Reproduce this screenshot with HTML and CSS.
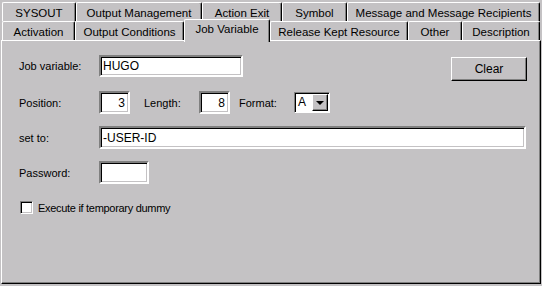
FILE: index.html
```html
<!DOCTYPE html>
<html lang="en">
<head>
    <meta charset="UTF-8">
    <meta name="viewport" content="width=device-width, initial-scale=1.0">
    <title>Job Variable</title>
    <link rel="stylesheet" href="styles.css">
</head>
<body>
    <div class="dialog">
        <div class="tab-row tab-row-back">
            <div class="tab">SYSOUT</div>
            <div class="tab">Output Management</div>
            <div class="tab">Action Exit</div>
            <div class="tab">Symbol</div>
            <div class="tab">Message and Message Recipients</div>
        </div>
        <div class="tab-row tab-row-front">
            <div class="tab">Activation</div>
            <div class="tab">Output Conditions</div>
            <div class="tab selected">Job Variable</div>
            <div class="tab">Release Kept Resource</div>
            <div class="tab">Other</div>
            <div class="tab">Description</div>
        </div>

        <div class="panel">
            <div class="row row-jobvar">
                <label class="field-label" for="jobvar">Job variable:</label>
                <input class="field field-jobvar" type="text" id="jobvar" value="HUGO">
                <button class="btn-clear" type="button">Clear</button>
            </div>

            <div class="row row-position">
                <label class="field-label" for="position">Position:</label>
                <input class="field field-num" type="text" id="position" value="3">
                <label class="inline-label label-length" for="length">Length:</label>
                <input class="field field-num" type="text" id="length" value="8">
                <label class="inline-label label-format">Format:</label>
                <div class="combo">
                    <span class="combo-value">A</span>
                    <span class="combo-btn"><span class="combo-arrow"></span></span>
                </div>
            </div>

            <div class="row row-setto">
                <label class="field-label" for="setto">set to:</label>
                <input class="field field-setto" type="text" id="setto" value="-USER-ID">
            </div>

            <div class="row row-password">
                <label class="field-label" for="password">Password:</label>
                <input class="field field-password" type="password" id="password">
            </div>

            <div class="row row-check">
                <span class="checkbox"></span>
                <span class="check-label">Execute if temporary dummy</span>
            </div>
        </div>
    </div>
</body>
</html>
```

FILE: styles.css
```css
body {
    margin: 0;
    padding: 0;
    background-color: #c4c2c4;
    font-family: "Liberation Sans", Arial, sans-serif;
    font-size: 11px;
    color: #000;
}

.dialog {
    width: 542px;
    height: 286px;
    box-sizing: border-box;
    padding-top: 2px;
}

/* tabs */
.tab-row {
    display: flex;
    padding-left: 2px;
    height: 19px;
    position: relative;
}
.tab {
    box-sizing: border-box;
    height: 19px;
    display: flex;
    align-items: center;
    justify-content: center;
    padding-top: 1px;
    border-top: 1px solid #fff;
    border-left: 1px solid #fff;
    border-right: 1px solid #000;
    box-shadow: inset -1px 0 #808080;
    border-radius: 2px 2px 0 0;
    background-color: #c4c2c4;
    font-size: 11.5px;
    white-space: nowrap;
}
.tab-row-back .tab:nth-child(1) { width: 74px; }
.tab-row-back .tab:nth-child(2) { width: 126px; }
.tab-row-back .tab:nth-child(3) { width: 80px; }
.tab-row-back .tab:nth-child(4) { width: 65px; }
.tab-row-back .tab:nth-child(5) { width: 193px; }

.tab-row-front .tab:nth-child(1) { width: 73px; }
.tab-row-front .tab:nth-child(2) { width: 109px; }
.tab-row-front .tab:nth-child(3) { width: 86px; }
.tab-row-front .tab:nth-child(4) { width: 138px; }
.tab-row-front .tab:nth-child(5) { width: 54px; }
.tab-row-front .tab:nth-child(6) { width: 78px; }

.tab.selected {
    height: 23px;
    margin-top: -2px;
    padding-top: 0;
    padding-bottom: 4px;
    position: relative;
    z-index: 2;
}

/* page */
.panel {
    box-sizing: border-box;
    height: 244px;
    margin-left: 1px;
    width: 540px;
    border-top: 1px solid #fff;
    border-left: 1px solid #fff;
    border-right: 1px solid #000;
    border-bottom: 1px solid #000;
    box-shadow: inset -1px -1px #808080;
    padding: 14px 0 0 16px;
    position: relative;
}

.row {
    display: flex;
    align-items: center;
}
.row-jobvar { height: 22px; align-items: flex-start; }
.row-jobvar .field-label { line-height: 22px; }
.row-position { height: 23px; margin-top: 14px; }
.row-setto { height: 23px; margin-top: 12px; }
.row-password { height: 23px; margin-top: 12px; }
.row-check { height: 13px; margin-top: 17px; }

.field-label {
    width: 80px;
    padding-left: 1px;
    flex-shrink: 0;
}
.inline-label { flex-shrink: 0; }
.label-length { margin-left: 14px; width: 55px; }
.label-format { margin-left: 9px; width: 55px; }

/* sunken edit boxes */
.field {
    box-sizing: border-box;
    height: 100%;
    margin: 0;
    padding: 0 2px;
    border-style: solid;
    border-width: 2px;
    border-color: #808080 #fff #fff #808080;
    box-shadow: inset 1px 1px #000, inset -1px -1px #c4c2c4;
    background-color: #fff;
    font-family: "Liberation Sans", Arial, sans-serif;
    font-size: 12px;
    color: #000;
    outline: none;
}
.field-jobvar { width: 144px; height: 22px; }
.field-num { width: 31px; text-align: right; padding-right: 3px; }
.field-setto { width: 427px; }
.field-password { width: 50px; }

.btn-clear {
    box-sizing: border-box;
    width: 76px;
    height: 24px;
    margin: 2px 0 0 auto;
    margin-right: 13px;
    padding: 0;
    border-style: solid;
    border-width: 1px;
    border-color: #fff #000 #000 #fff;
    box-shadow: inset -1px -1px #808080;
    background-color: #c4c2c4;
    font-family: "Liberation Sans", Arial, sans-serif;
    font-size: 12px;
    color: #000;
}

/* drop-down */
.combo {
    box-sizing: border-box;
    width: 36px;
    height: 21px;
    display: flex;
    border-style: solid;
    border-width: 1px;
    border-color: #808080 #fff #fff #808080;
    box-shadow: inset 1px 1px #000;
    background-color: #fff;
    padding: 1px;
}
.combo-value {
    flex: 1;
    padding-left: 2px;
    font-size: 12px;
    line-height: 17px;
}
.combo-btn {
    box-sizing: border-box;
    width: 16px;
    height: 17px;
    display: flex;
    align-items: center;
    justify-content: center;
    border-style: solid;
    border-width: 1px;
    border-color: #fff #000 #000 #fff;
    box-shadow: inset -1px -1px #808080;
    background-color: #c4c2c4;
}
.combo-arrow {
    width: 0;
    height: 0;
    border-left: 4px solid transparent;
    border-right: 4px solid transparent;
    border-top: 4px solid #000;
}

/* checkbox */
.checkbox {
    box-sizing: border-box;
    width: 13px;
    height: 13px;
    flex-shrink: 0;
    margin-left: 2px;
    border-style: solid;
    border-width: 1px;
    border-color: #808080 #fff #fff #808080;
    box-shadow: inset 1px 1px #000, inset -1px -1px #c4c2c4;
    background-color: #fff;
}
.check-label {
    margin-left: 5px;
    letter-spacing: -0.3px;
}
```
